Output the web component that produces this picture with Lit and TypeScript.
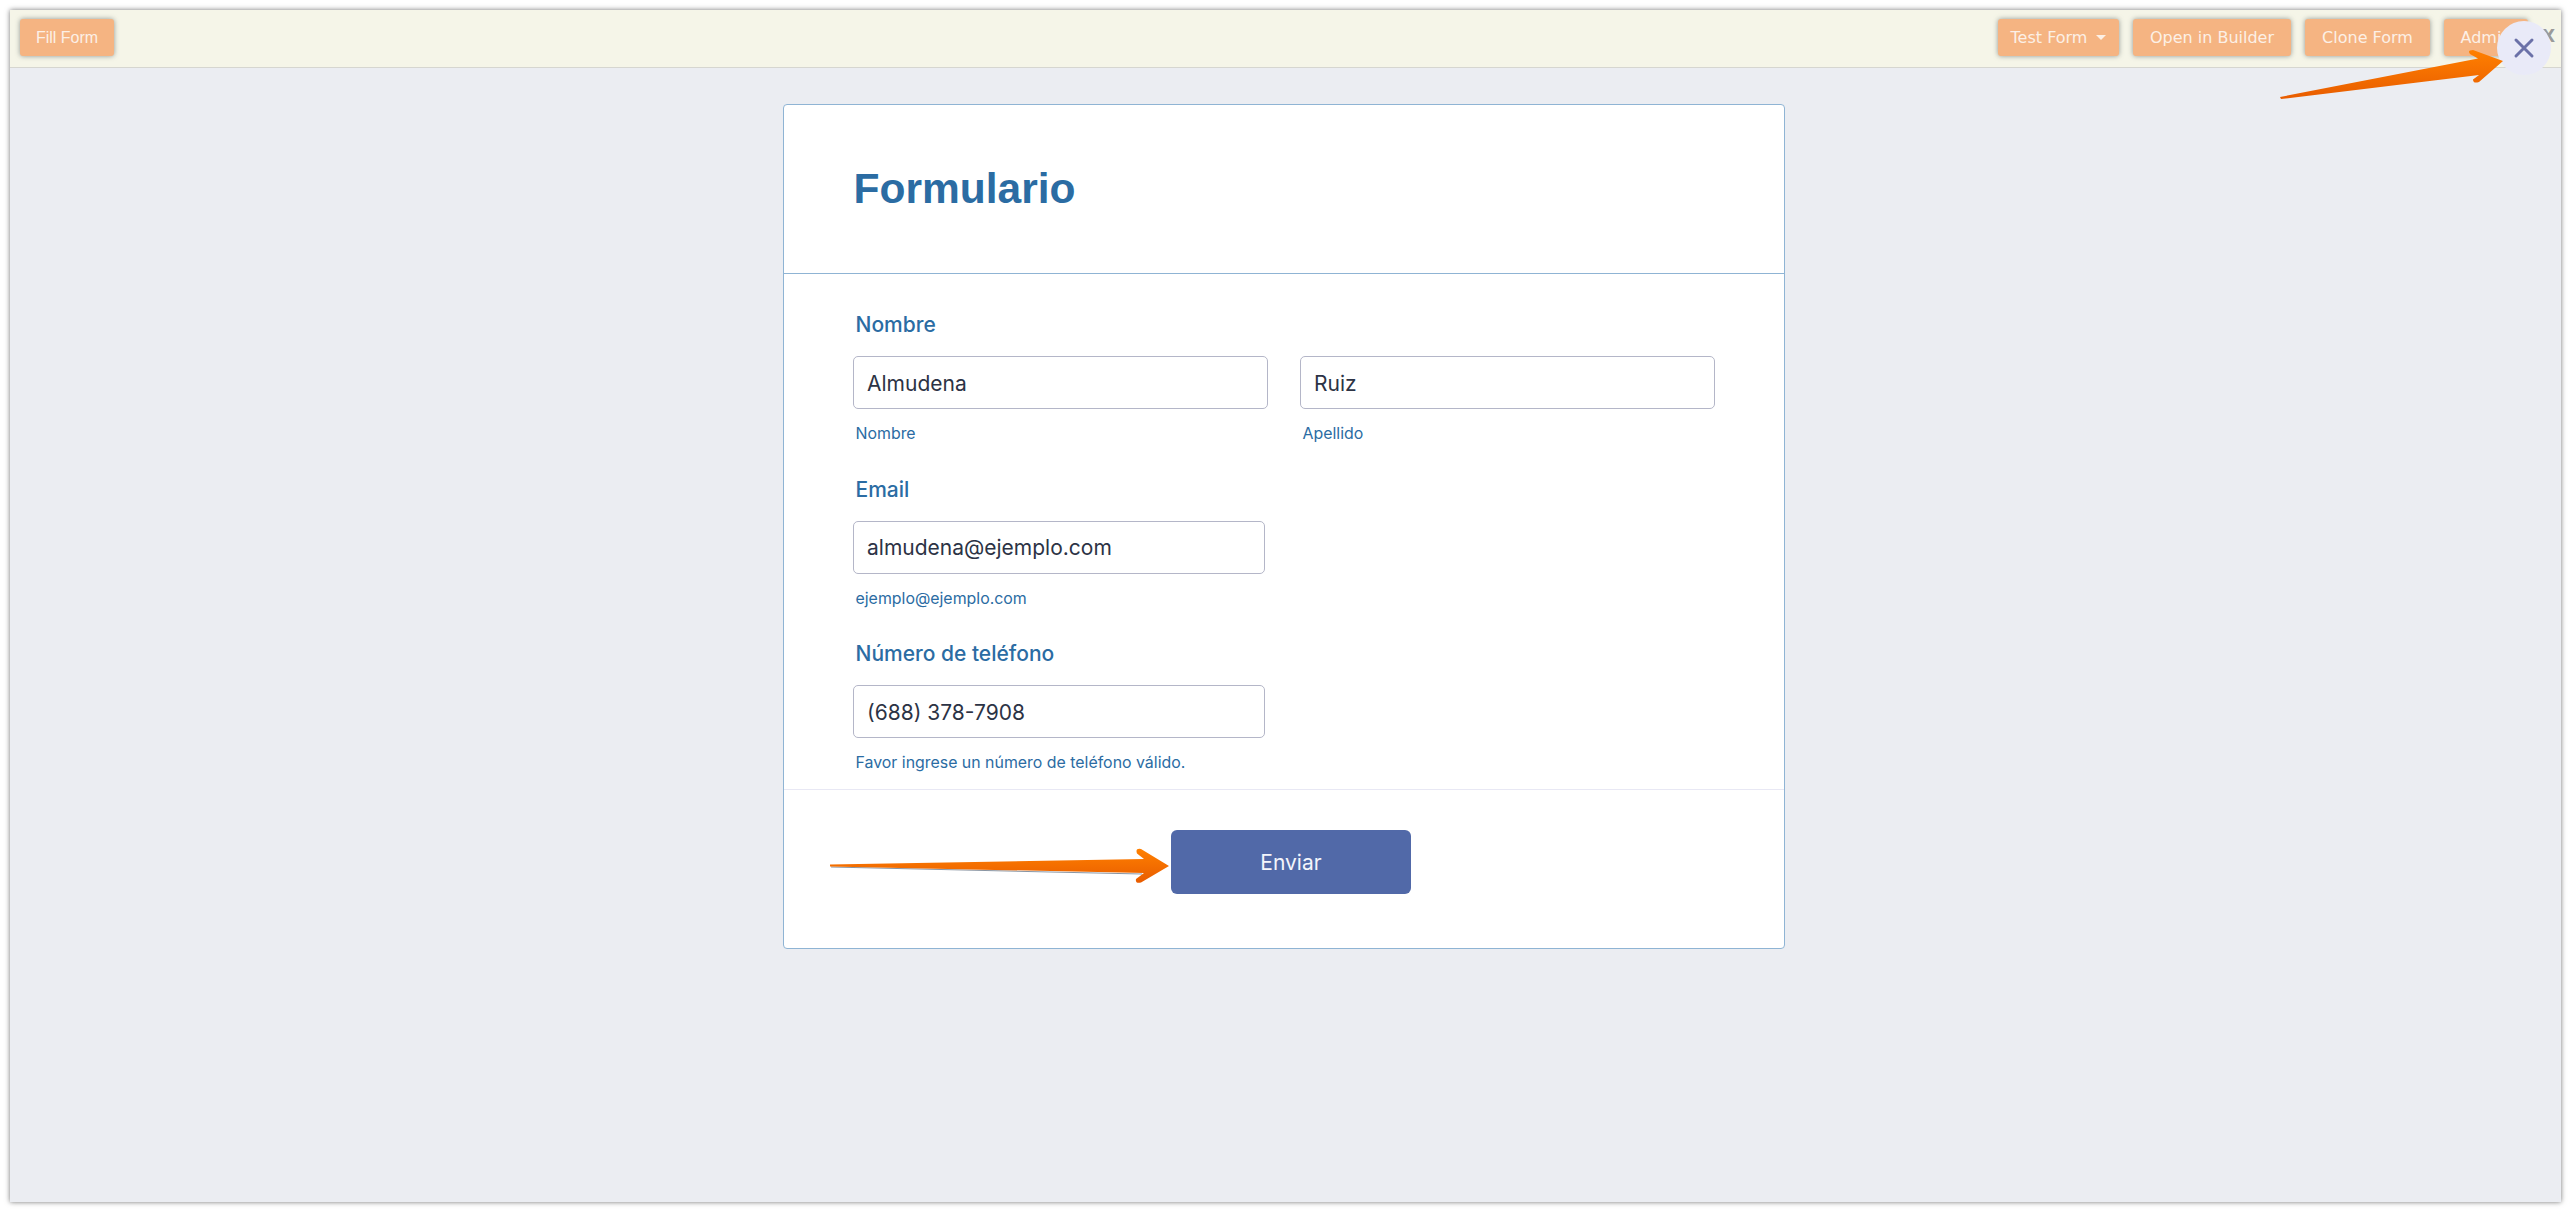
import { css, html, LitElement } from 'lit';
import { customElement } from 'lit/decorators.js';

@customElement('form-field')
export class FormField extends LitElement {
  static properties = {
    label: { type: String },
    hint: { type: String },
    value: { type: String },
  };

  declare label: string;
  declare hint: string;
  declare value: string;

  static styles = css`
    :host {
      display: block;
      margin-bottom: 33.5px;
    }

    .label {
      height: 24px;
      line-height: 24px;
      margin: 0 0 19px 3px;
      font-size: 21px;
      font-weight: 500;
      color: #2b6ca3;
    }

    .hint {
      height: 20px;
      line-height: 20px;
      margin: 15px 0 0 3px;
      font-size: 15.9px;
      color: #2b6ca3;
    }

    input {
      display: block;
      width: 100%;
      height: 53px;
      box-sizing: border-box;
      padding: 1px 13.5px 0;
      border: 1px solid #b4b6c8;
      border-radius: 5px;
      background: #fff;
      font: 400 21px Inter, sans-serif;
      color: #2c3345;
      outline: none;
    }
  `;

  protected render() {
    return html`
      <div class="label">${this.label}</div>
      <input type="text" .value=${this.value} />
      <div class="hint">${this.hint}</div>
    `;
  }
}

@customElement('app-root')
export class AppRoot extends LitElement {
  static styles = css`
    :host {
      display: block;
      position: relative;
      width: 2570px;
      height: 1212px;
      box-sizing: border-box;
      padding: 10px 9px 10px 10px;
      background: #fff;
      font-family: Inter, sans-serif;
    }

    .window {
      display: flex;
      flex-direction: column;
      height: 100%;
      background: #ebedf2;
      box-shadow: 0 0 5px rgba(0, 0, 0, 0.55);
    }

    .topbar {
      display: flex;
      align-items: flex-start;
      justify-content: space-between;
      flex: none;
      height: 58px;
      box-sizing: border-box;
      padding: 9px 33px 0 10px;
      background: #f5f5e8;
      border-bottom: 1px solid #d6d6d0;
    }

    .actions {
      display: flex;
      gap: 14px;
    }

    .btn {
      display: flex;
      align-items: center;
      justify-content: center;
      height: 37px;
      box-sizing: border-box;
      border-radius: 3px;
      background: #f5b482;
      box-shadow: 0 0 5px rgba(80, 90, 90, 0.6);
      font: 16px 'DejaVu Sans', sans-serif;
      color: #fcf0e6;
      white-space: nowrap;
    }

    .fill {
      width: 94px;
      font: 16px 'Liberation Sans', sans-serif;
    }

    .test { width: 121px; gap: 9px; }
    .builder { width: 158px; }
    .clone { width: 125px; }
    .admin { width: 84px; }

    .caret {
      width: 0;
      height: 0;
      border-left: 5px solid transparent;
      border-right: 5px solid transparent;
      border-top: 5px solid #fcf0e6;
    }

    .dismiss {
      position: absolute;
      left: 2542px;
      top: 26px;
      font: 700 17px 'DejaVu Sans', sans-serif;
      color: #9a9a9a;
    }

    .close {
      position: absolute;
      left: 2497px;
      top: 21px;
      display: flex;
      align-items: center;
      justify-content: center;
      width: 54px;
      height: 54px;
      border-radius: 50%;
      background: #e9eaf8;
    }

    .stage {
      flex: 1;
      display: flex;
      justify-content: center;
      align-items: flex-start;
      padding: 36px 4px 0 0;
    }

    .card {
      width: 1002px;
      height: 845px;
      box-sizing: border-box;
      background: #fff;
      border: 1px solid #8fb4d4;
      border-radius: 4px;
    }

    .card-head {
      height: 169px;
      box-sizing: border-box;
      padding: 0 70px;
      display: flex;
      align-items: center;
      border-bottom: 1px solid #8fb4d4;
    }

    h1 {
      margin: 0 0 1px;
      font: 700 42.5px 'Liberation Sans', sans-serif;
      color: #2b6ca3;
    }

    .card-body {
      height: 516px;
      box-sizing: border-box;
      padding: 39px 0 0 69px;
      border-bottom: 1px solid #e8e8f4;
    }

    .name-row {
      display: grid;
      grid-template-columns: 415px 415px;
      gap: 32px;
    }

    .single {
      width: 412px;
    }

    .card-foot {
      display: flex;
      justify-content: center;
      padding: 40px 0 0 15px;
    }

    .send {
      width: 240px;
      height: 64px;
      border: none;
      border-radius: 6px;
      background: #5169a8;
      color: #f4f5fb;
      font: 400 21px Inter, sans-serif;
    }

    .arrows {
      position: absolute;
      left: 0;
      top: 0;
      pointer-events: none;
    }
  `;

  protected render() {
    return html`
      <div class="window">
        <div class="topbar">
          <div class="btn fill">Fill Form</div>
          <div class="actions">
            <div class="btn test">Test Form <span class="caret"></span></div>
            <div class="btn builder">Open in Builder</div>
            <div class="btn clone">Clone Form</div>
            <div class="btn admin">Admin</div>
          </div>
        </div>
        <div class="stage">
          <div class="card">
            <div class="card-head"><h1>Formulario</h1></div>
            <div class="card-body">
              <div class="name-row">
                <form-field label="Nombre" hint="Nombre" value="Almudena"></form-field>
                <form-field hint="Apellido" value="Ruiz"></form-field>
              </div>
              <form-field class="single" label="Email" hint="ejemplo@ejemplo.com" value="almudena@ejemplo.com"></form-field>
              <form-field class="single" label="Número de teléfono" hint="Favor ingrese un número de teléfono válido." value="(688) 378-7908"></form-field>
            </div>
            <div class="card-foot"><button class="send" type="button">Enviar</button></div>
          </div>
        </div>
      </div>
      <span class="dismiss">X</span>
      <div class="close">
        <svg width="24" height="24" viewBox="0 0 24 24" fill="none" stroke="#6b71a8" stroke-width="3" stroke-linecap="round">
          <path d="M4 4 20 20M20 4 4 20" />
        </svg>
      </div>
      <svg class="arrows" width="2570" height="1212" viewBox="0 0 2570 1212">
        <defs>
          <linearGradient id="orange" x1="0" y1="0" x2="0" y2="1">
            <stop offset="0" stop-color="#ff8000" />
            <stop offset="1" stop-color="#e85c00" />
          </linearGradient>
        </defs>
        <path d="M831 866.5 1142 873.5 1142 874.5 831 867.5Z" fill="#6b7a8c" opacity="0.8" />
        <path d="M830 864.5 1144 859 1137 853.5Q1135 848 1141 849L1169 866 1141 882.5Q1135 884 1136 879L1144 873 830 866.5Z" fill="url(#orange)" />
        <path d="M2281 99 2479 75 2473 79.5Q2473 84 2479 82L2503 61 2473 50Q2467 50 2470 54L2478 58.5 2280 97Z" fill="url(#orange)" />
      </svg>
    `;
  }
}
